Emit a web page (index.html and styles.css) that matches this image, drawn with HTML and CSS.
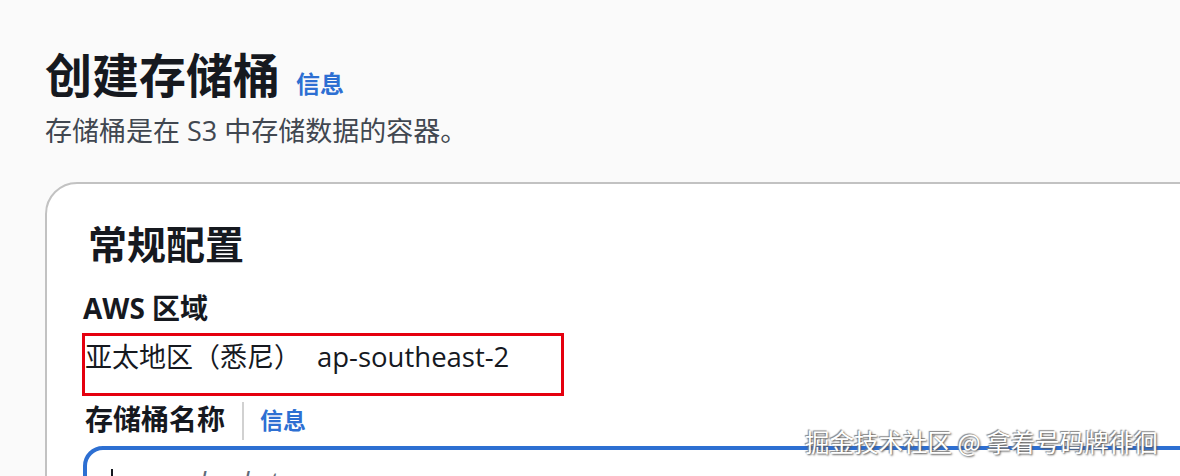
FILE: index.html
```html
<!DOCTYPE html>
<html lang="zh-CN">
<head>
<meta charset="utf-8">
<title>创建存储桶</title>
<link rel="stylesheet" href="styles.css">
</head>
<body>
<div class="page">
  <div class="header">
    <h1 class="title">创建存储桶</h1>
    <a class="info title-info" href="#">信息</a>
  </div>
  <p class="subtitle">存储桶是在 S3 中存储数据的容器。</p>

  <section class="card">
    <h2 class="card-title">常规配置</h2>
    <div class="label">AWS 区域</div>
    <div class="highlight">
      <div class="value">亚太地区（悉尼）<span class="code">ap-southeast-2</span></div>
    </div>
    <div class="label-row">
      <span class="label">存储桶名称</span>
      <span class="divider"></span>
      <a class="info" href="#">信息</a>
    </div>
    <div class="input">
      <span class="cursor"></span>
      <span class="placeholder">myawsbucket</span>
    </div>
  </section>
</div>
<div class="watermark">掘金技术社区 @ 拿着号码牌徘徊</div>
</body>
</html>
```

FILE: styles.css
```css
html, body {
  margin: 0;
  padding: 0;
  height: 476px;
  overflow: hidden;
}
body {
  background: #fafafa;
  font-family: "Open Sans", "Noto Sans CJK SC", sans-serif;
  color: #16191f;
  position: relative;
}
.page {
  padding: 45px 0 0 45px;
}
.header {
  display: flex;
  align-items: baseline;
  gap: 16px;
}
.title {
  margin: 0;
  font-size: 47px;
  line-height: 56px;
  font-weight: 700;
  font-family: "Noto Sans CJK SC", sans-serif;
}
.info {
  color: #2d6fd2;
  text-decoration: none;
  font-weight: 700;
  font-family: "Noto Sans CJK SC", sans-serif;
}
.title-info {
  font-size: 24px;
}
.subtitle {
  margin: 12px 0 0;
  font-size: 27px;
  line-height: 36px;
  color: #414750;
}
.card {
  margin-top: 33px;
  width: 1300px;
  height: 400px;
  background: #fff;
  border: 2px solid #c2c2c2;
  border-radius: 32px;
  padding: 34px 0 0 36px;
}
.card-title {
  margin: 0;
  font-size: 39px;
  line-height: 48px;
  font-weight: 700;
  font-family: "Noto Sans CJK SC", sans-serif;
  padding-left: 5px;
}
.label {
  margin-top: 24px;
  font-size: 28px;
  line-height: 36px;
  font-weight: 700;
}
.highlight {
  margin: 7px 0 0 -1px;
  width: 476px;
  height: 57px;
  border: 3px solid #e5000f;
  padding: 0;
}
.value {
  font-size: 27px;
  line-height: 36px;
  margin-top: 3px;
}
.code {
  margin-left: 16px;
  font-size: 27.5px;
}
.label-row {
  margin-top: 5px;
  display: flex;
  align-items: center;
  height: 36px;
}
.label-row .label {
  margin: 0;
  padding-left: 2px;
}
.divider {
  width: 2px;
  height: 38px;
  background: #d1d1d1;
  margin: 4px 16px 0 17px;
}
.label-row .info {
  font-size: 23px;
}
.input {
  margin-top: 9px;
  width: 1200px;
  height: 60px;
  border: 4px solid #2d6fd2;
  border-radius: 20px;
  display: flex;
  align-items: flex-start;
  padding: 14px 0 0 24px;
  box-sizing: border-box;
}
.cursor {
  width: 2px;
  height: 30px;
  background: #16191f;
  margin-top: 5px;
}
.placeholder {
  margin-left: 4px;
  font-size: 27px;
  line-height: 36px;
  font-style: italic;
  color: #5f6b7a;
}
.watermark {
  position: absolute;
  left: 805px;
  top: 424px;
  font-family: "Noto Sans CJK SC", sans-serif;
  font-size: 24.5px;
  line-height: 36px;
  color: #fff;
  text-shadow: 1px 1px 2px #555, -1px -1px 1px #888;
  white-space: nowrap;
}
```
